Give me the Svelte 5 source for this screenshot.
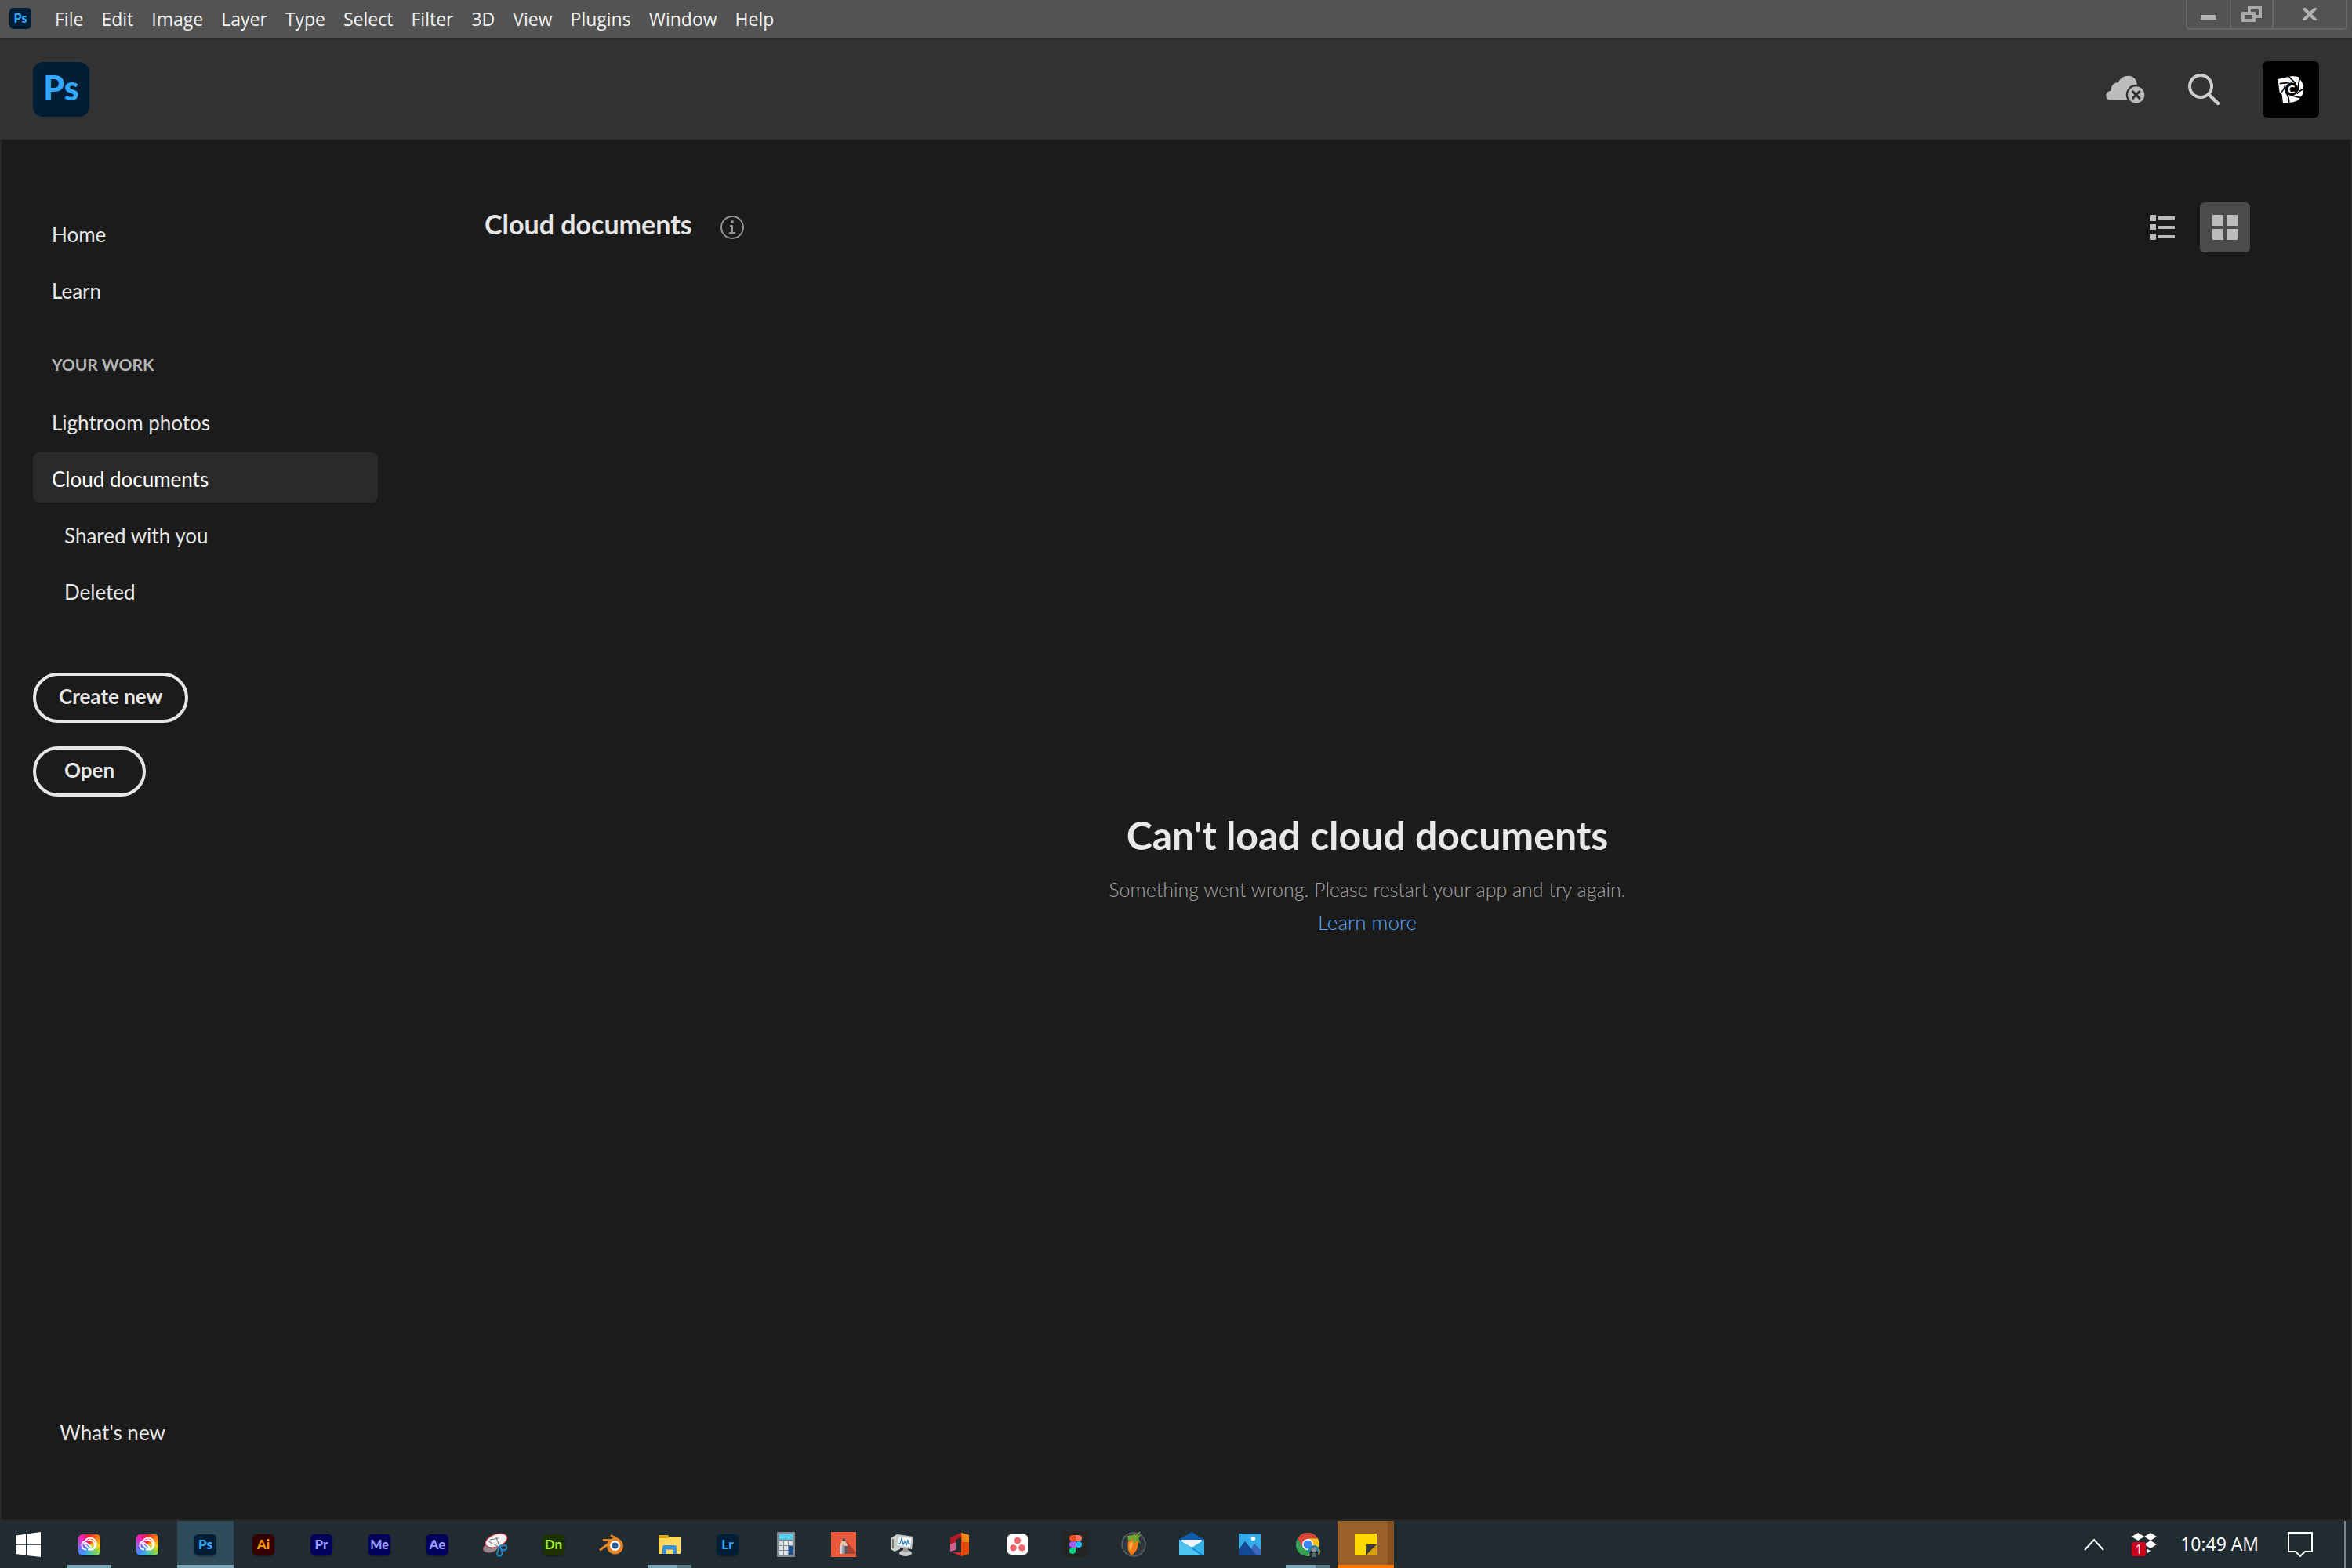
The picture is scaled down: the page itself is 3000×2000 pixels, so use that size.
<script>
  const menus = ['File', 'Edit', 'Image', 'Layer', 'Type', 'Select', 'Filter', '3D', 'View', 'Plugins', 'Window', 'Help'];
  const primary = ['Home', 'Learn'];
  const work = [
    { label: 'Lightroom photos' },
    { label: 'Cloud documents', current: true },
    { label: 'Shared with you', sub: true },
    { label: 'Deleted', sub: true }
  ];
  const apps = [
    { name: 'Creative Cloud', icon: 'cc', state: 'running' },
    { name: 'Creative Cloud Desktop', icon: 'cc' },
    { name: 'Photoshop', tile: 'Ps', state: 'active' },
    { name: 'Illustrator', tile: 'Ai' },
    { name: 'Premiere Pro', tile: 'Pr' },
    { name: 'Media Encoder', tile: 'Me' },
    { name: 'After Effects', tile: 'Ae' },
    { name: 'Snipping Tool', icon: 'snip' },
    { name: 'Dimension', tile: 'Dn' },
    { name: 'Blender', icon: 'blender' },
    { name: 'File Explorer', icon: 'folder', state: 'running stacked' },
    { name: 'Lightroom', tile: 'Lr' },
    { name: 'Calculator', icon: 'calc' },
    { name: 'SketchBook', icon: 'sketch' },
    { name: 'Resource Monitor', icon: 'monitor' },
    { name: 'Office', icon: 'office' },
    { name: 'Asana', icon: 'asana' },
    { name: 'Figma', icon: 'figma' },
    { name: 'FL Studio', icon: 'fruit' },
    { name: 'Mail', icon: 'mail' },
    { name: 'Photos', icon: 'photos' },
    { name: 'Chrome', icon: 'chrome', state: 'running stacked' },
    { name: 'Sticky Notes', icon: 'sticky', state: 'alert' }
  ];
</script>

<div class="window">
  <div class="menubar">
    <span class="logo small">Ps</span>
    <nav class="menus" aria-label="Application menu">
      {#each menus as m}<button>{m}</button>{/each}
    </nav>
    <div class="controls">
      <button aria-label="Minimize"><svg width="20" height="20"><path d="M0 11h20v6H0z" fill="#b2b2b2" /></svg></button>
      <button aria-label="Restore">
        <svg width="26" height="20"><g fill="none" stroke="#a8a8a8" stroke-width="4"><path d="M10 8V2h14v11h-6" /><path d="M2 9h14v9H2z" /></g></svg>
      </button>
      <button class="close" aria-label="Close"><svg width="20" height="16"><path d="M2 0l16 16M18 0L2 16" stroke="#b2b2b2" stroke-width="4" /></svg></button>
    </div>
  </div>

  <header>
    <span class="logo">Ps</span>
    <div class="tools">
      <button aria-label="Cloud sync status">
        <svg width="50" height="40" viewBox="20 70 150 120">
          <path fill="#bcbcbc" d="M38 171C28 171 21 164 21 154S28 136 39 136C39 116 52 102 68 104C74 87 90 77 108 78C127 79 140 94 139 112A38 38 0 0 0 104 171z" />
          <circle cx="136" cy="151" r="38" fill="#323232" />
          <circle cx="136" cy="151" r="32" fill="#bcbcbc" />
          <path d="M123 138l26 26M149 138l-26 26" stroke="#323232" stroke-width="9" stroke-linecap="round" />
        </svg>
      </button>
      <button aria-label="Search">
        <svg width="40" height="40" viewBox="330 72 120 120" fill="none" stroke="#cdcdcd">
          <circle cx="378" cy="120" r="42" stroke-width="12" />
          <path d="M410 152l34 34" stroke-width="13" stroke-linecap="round" />
        </svg>
      </button>
      <button class="avatar" aria-label="Account">
        <svg width="34" height="37" viewBox="678 76 102 111">
          <path fill="#fff" d="M679 91L735 79L758 82L771 101L777 118L775 148L757 172L738 179L699 184L695 150L686 141z" />
          <circle cx="732" cy="129" r="25" fill="#000" />
          <g stroke="#000" stroke-width="5" fill="none">
            <path d="M686 108L722 104M722 82L748 108M764 88Q756 108 757 135M778 127Q764 135 752 147M768 162Q745 158 726 150M722 184Q724 160 708 140M690 143Q704 132 707 112" />
          </g>
          <text x="731" y="144" text-anchor="middle" font-family="Lato" font-weight="900" font-size="42" fill="#fff">C</text>
        </svg>
      </button>
    </div>
  </header>

  <div class="body">
    <aside>
      <nav class="links" aria-label="Home">
        {#each primary as p}<a href="#home">{p}</a>{/each}
      </nav>
      <h2>YOUR WORK</h2>
      <nav class="links" aria-label="Your work">
        {#each work as w}<a href="#work" class:sub={w.sub} class:current={w.current}>{w.label}</a>{/each}
      </nav>
      <div class="actions">
        <button>Create new</button>
        <button>Open</button>
      </div>
      <a class="news" href="#news">What's new</a>
    </aside>

    <main>
      <div class="heading">
        <h1>Cloud documents</h1>
        <button class="info" aria-label="About cloud documents">
          <svg width="30" height="30" fill="none" stroke="#929292" stroke-width="2">
            <circle cx="15" cy="15" r="14" />
            <path d="M12 13h3v9M11 22h8" /><circle cx="15" cy="8" r="1" fill="#929292" />
          </svg>
        </button>
        <div class="views">
          <button aria-label="List view">
            <svg width="32" height="32" fill="#bcbcbc">
              {#each [0, 12, 24] as y}<rect {y} width="8" height="8" rx="1" /><rect x="10" y={y + 2} width="22" height="4" rx="1" />{/each}
            </svg>
          </button>
          <button class="on" aria-label="Grid view" aria-pressed="true">
            <svg width="32" height="32" fill="#bcbcbc">
              {#each [0, 18] as y}{#each [0, 18] as x}<rect {x} {y} width="14" height="14" rx="1" />{/each}{/each}
            </svg>
          </button>
        </div>
      </div>
      <section class="empty">
        <h3>Can't load cloud documents</h3>
        <p>Something went wrong. Please restart your app and try again.</p>
        <a href="#more">Learn more</a>
      </section>
    </main>
  </div>

  <footer>
    <button class="start" aria-label="Start">
      <svg width="32" height="32" fill="#fff"><path d="M0 4.500L13 2.700V15.300H0zM14.300 2.500L32 0V15.300H14.300zM0 16.700H13V29.700L0 28zM14.300 16.700H32V32L14.300 29.900z" /></svg>
    </button>
    <div class="apps">
      {#each apps as a}
        <button class="app {a.state ?? ''}" aria-label={a.name}>
          {#if a.tile}
            <span class="tile {a.tile}">{a.tile}</span>
          {:else if a.icon === 'cc'}
            <span class="tile cc">
              <svg width="28" height="28" fill="none" stroke="#fff" stroke-width="1.800">
                <path d="M10 20.500H9.500A5.500 5.500 0 0 1 8.500 9.700A7.500 7.500 0 1 1 17 20.500C14 20.500 12.500 18 8 14" />
                <path d="M6.500 13.500Q9 10.500 12 13.500L17 18M11.500 9.500Q15 6.500 18.500 10T20.500 16.500M12 20.500Q18 21.500 20.500 17" />
              </svg>
            </span>
          {:else}
            <svg width="32" height="32" viewBox="0 0 32 32">
              {#if a.icon === 'snip'}
                <ellipse cx="10" cy="20" rx="10" ry="6" fill="#8e8e90" stroke="#a94448" stroke-width=".7" transform="rotate(-15 10 20)" />
                <ellipse cx="17" cy="11" rx="14.500" ry="8" fill="#f4f2f3" stroke="#d2353c" stroke-width="1.200" transform="rotate(-20 17 11)" />
                <path d="M7 12L20 19M17 7L22 21M9 10L20 8" stroke="#707478" stroke-width="1" fill="none" />
                <g fill="none" stroke="#2386c4" stroke-width="2"><path d="M21 18L29 17Q32 21 28 23T21 18zM21 18L18 28Q19 32 23 30T21 18z" /></g>
              {:else if a.icon === 'blender'}
                <path d="M2 22.500L15 13M6 10.500H19M16 5Q25 9 28 14" stroke="#e58423" stroke-width="3" stroke-linecap="round" fill="none" />
                <circle cx="20.500" cy="18" r="10.500" fill="#e58423" /><circle cx="20.500" cy="17.500" r="6.500" fill="#fff" /><circle cx="20.500" cy="17.500" r="4" fill="#255c99" />
              {:else if a.icon === 'folder'}
                <path d="M2 4h12l2 3v4H2z" fill="#dba514" /><path d="M2 8h12l3-2h13v22H2z" fill="#ffd75e" />
                <path d="M7 28V18.500L9 17H23L25 18.500V28H20.500V22.500H12V28z" fill="#3590d8" />
              {:else if a.icon === 'calc'}
                <rect x="5" width="23" height="32" rx="1" fill="#7f8b93" /><rect x="8" y="3" width="17" height="6.500" fill="#4fd0f4" />
                {#each [12, 18, 24] as y}{#each [8, 14, 20] as x}<rect {x} {y} width="5" height="5" fill="#dfe3e6" />{/each}{/each}
                <path d="M20 18h5v11h-5z" fill="#194f91" />
              {:else if a.icon === 'sketch'}
                <path d="M0 0h32v32H0z" fill="#e9593a" /><path d="M16 7L32 27V28H20z" fill="#a64330" />
                <path d="M11 17L16 7L21 17V28H11z" fill="#e9c3a6" /><path d="M14 11.500L16 7L18.500 12z" fill="#303033" />
                <path d="M11 18h3v10h-3z" fill="#d6d7dc" /><path d="M14 17h3.500v11H14z" fill="#a09ca5" /><path d="M17.500 18H21v10h-3.500z" fill="#5c5460" />
              {:else if a.icon === 'monitor'}
                <path d="M2 8L10 3L14 5V22L7 25L2 22z" fill="#cbcfcc" /><path d="M5 9V21" stroke="#4c644b" stroke-width="1.500" />
                <ellipse cx="21" cy="27" rx="8" ry="4" fill="#c9cac8" /><path d="M18 20h6v6h-6z" fill="#999" />
                <path d="M11 3L31 6L29 22L7 19z" fill="#c4c6c3" /><path d="M13 5.500L28.500 8L27 19.500L10 17z" fill="#f6f8f9" />
                <path d="M11 15L14 15L16 8L18 16L20 12L22 17L24 10L25 15L27 15" fill="none" stroke="#2c82bf" stroke-width="1.200" />
              {:else if a.icon === 'office'}
                <path d="M4 7L18 1V7L11 10V23L4 25z" fill="#b31b24" /><path d="M4 16L11 13V23L4 25z" fill="#cf5f91" />
                <path d="M18 1L28 4V28L18 31z" fill="#e8480c" /><path d="M18 1L28 4V13H20z" fill="#f58a13" /><path d="M7 26H18V31z" fill="#d22b2d" />
              {:else if a.icon === 'asana'}
                <rect x="3" y="3" width="26" height="26" rx="5" fill="#fff" />
                <g fill="#f5636d"><circle cx="16" cy="11" r="4.200" /><circle cx="10.500" cy="20.300" r="4.200" /><circle cx="21.500" cy="20.300" r="4.200" /></g>
              {:else if a.icon === 'figma'}
                <path d="M0 0h32v32H0z" fill="#242424" />
                <path d="M16 4h-4a4 4 0 0 0 0 8h4z" fill="#f24e1e" /><path d="M16 4h4a4 4 0 0 1 0 8h-4z" fill="#ff7262" />
                <path d="M16 12h-4a4 4 0 0 0 0 8h4z" fill="#a259ff" /><circle cx="20" cy="16" r="4" fill="#1abcfe" /><path d="M16 20h-4a4 4 0 1 0 4 4z" fill="#0acf83" />
              {:else if a.icon === 'fruit'}
                <circle cx="16" cy="16" r="15" fill="#30383b" stroke="#566164" stroke-width="1.500" />
                <path d="M9 12Q17 6 22 13Q22 24 13 30Q7 24 9 12z" fill="#f47a16" /><path d="M11 15Q13 11 15 14Q14 21 12 24Q9 20 11 15z" fill="#ffae48" />
                <path d="M8 5L14 4L19 2L18 5L25 4L22 8L25 15L20 11L17 16L15 10L9 11z" fill="#6fa52d" /><path d="M18 6L24 0" stroke="#7eae3a" stroke-width="1.500" />
              {:else if a.icon === 'mail'}
                <path d="M0 9.500L16 0L32 9.500V14H0z" fill="#0b5cad" /><path d="M3 10H29V20H3z" fill="#f2f4f8" />
                <path d="M0 10L16 20L32 10V30H0z" fill="#35b3ea" /><path d="M0 30L16 19L32 30z" fill="#1988d4" /><path d="M0 10L28 30H0z" fill="#4fc4f2" />
              {:else if a.icon === 'photos'}
                <path d="M2 2h28v28H2z" fill="#34aae8" /><path d="M12 30L22 15L30 23V30z" fill="#3b67bd" /><path d="M2 22L10 12L25 30H2z" fill="#144a94" />
                <circle cx="20.500" cy="8.500" r="2.800" fill="#fff" />
              {:else if a.icon === 'chrome'}
                <circle cx="16" cy="16" r="15" fill="#34a055" /><path d="M16 16L3 8.500A15 15 0 0 1 29 8.500H16z" fill="#db4437" />
                <path d="M16 8.500H29A15 15 0 0 1 16 31L22.500 19z" fill="#fbc21f" /><path d="M3 8.500L9.500 20L16 16V8.500z" fill="#db4437" /><path d="M3 8.500L9.500 20L14 30.900A15 15 0 0 1 3 8.500z" fill="#34a055" />
                <circle cx="16" cy="16" r="7" fill="#fff" /><circle cx="16" cy="16" r="5.500" fill="#4285f4" />
                <circle cx="24" cy="24.500" r="7.500" fill="#2384ad" /><path d="M18 31Q19 22 24 19Q29 22 30 31z" fill="#20262a" /><circle cx="24" cy="23" r="3.500" fill="#8b9498" /><path d="M21 27h6v4h-6z" fill="#596166" />
                <path d="M30 22Q32 25 30 29" stroke="#d7b33a" stroke-width="1.500" fill="none" />
              {:else}
                <path d="M2 2H30V16L16 30H2z" fill="#ffd900" /><path d="M30 16V30H16z" fill="#dba007" /><path d="M16 16H30L16 30z" fill="#39393b" />
              {/if}
            </svg>
          {/if}
        </button>
      {/each}
    </div>
    <div class="tray">
      <button aria-label="Show hidden icons"><svg width="26" height="16"><path d="M1 15L13 2L25 15" fill="none" stroke="#fff" stroke-width="2" /></svg></button>
      <button class="dropbox" aria-label="Dropbox, 1 notification">
        <svg width="32" height="30" fill="#fff"><path d="M8 0L16 5L8 10L0 5zM24 0L32 5L24 10L16 5zM24 10L32 15L24 20L16 15zM20 21L24 23L20 26z" /></svg>
        <span class="badge">1</span>
      </button>
      <time>10:49 AM</time>
      <button aria-label="Notifications">
        <svg width="32" height="32" fill="none" stroke="#fff" stroke-width="2"><path d="M1 1H31V25H22L16 31L10 25H1z" /></svg>
      </button>
    </div>
    <button class="peek" aria-label="Show desktop"></button>
  </footer>
</div>

<style>
  :global(body) { margin: 0; background: #1b1b1b; }
  * { box-sizing: border-box; }
  button { margin: 0; padding: 0; border: 0; background: none; color: inherit; font: inherit; display: flex; align-items: center; justify-content: center; }
  a { color: inherit; text-decoration: none; }
  h1, h2, h3, p { margin: 0; }
  svg { display: block; flex: none; }

  .window { min-height: 100vh; display: flex; flex-direction: column; color: #e6e6e6; font: 26px/32px Lato, sans-serif; }

  .menubar { height: 50px; display: flex; align-items: flex-start; padding: 0 6px 0 12px; background: #535353; border-bottom: 2px solid #292929; color: #f0f0f0; font: 23px/48px "Open Sans", sans-serif; }
  .menus { display: flex; gap: 23px; margin-left: 30px; flex: 1; }
  .logo { display: flex; align-items: center; justify-content: center; width: 72px; height: 70px; padding-bottom: 4px; border-radius: 13px; background: #001e36; color: #31a8ff; font: 900 43px/60px Lato, sans-serif; }
  .logo.small { width: 28px; height: 27px; margin-top: 10px; padding-bottom: 1px; border-radius: 5px; font-size: 16px; line-height: 26px; }
  .controls { display: flex; height: 38px; border: 2px solid #666; border-top: 0; border-radius: 0 0 5px 5px; }
  .controls button { width: 54px; }
  .controls button + button { border-left: 2px solid #666; }
  .controls .close { width: 94px; }

  header { height: 128px; display: flex; align-items: center; justify-content: space-between; padding: 0 42px; background: #323232; }
  .tools { display: flex; align-items: center; gap: 55px; }
  .avatar { width: 72px; height: 72px; border-radius: 6px; background: #000; }

  .body { flex: 1; display: flex; background: #1b1b1b; border: 2px solid #272727; border-top: 0; }
  aside { width: 480px; padding: 87px 0 81px 40px; display: flex; flex-direction: column; }
  .links { display: flex; flex-direction: column; gap: 8px; }
  .links a, .news { height: 64px; padding: 18px 24px 14px; border-radius: 8px; }
  .links .sub { padding-left: 40px; }
  .links .current { background: #2a2a2a; color: #fff; }
  h2 { padding: 51px 24px 28px; color: #b3b3b3; font: bold 21px/25px Lato, sans-serif; }
  .actions { display: flex; flex-direction: column; align-items: flex-start; gap: 30px; margin-top: 73px; flex: 1; }
  .actions button { height: 64px; min-width: 144px; padding: 0 29px 4px; border: 4px solid #e6e6e6; border-radius: 32px; font-weight: bold; }
  .news { padding-left: 34px; }

  main { flex: 1; padding: 80px 128px 28px 136px; display: flex; flex-direction: column; }
  .heading { display: flex; align-items: center; }
  h1 { padding-bottom: 8px; font: bold 34px/40px Lato, sans-serif; }
  .info { margin-left: 36px; }
  .views { margin-left: auto; display: flex; gap: 16px; }
  .views button { width: 64px; height: 64px; border-radius: 6px; }
  .views .on { background: #4b4b4b; }
  .empty { flex: 1; display: flex; flex-direction: column; align-items: center; justify-content: center; font-weight: 300; font-size: 25px; line-height: 42px; color: #a2a2a2; }
  .empty h3 { margin-bottom: 18px; font: bold 50px/60px Lato, sans-serif; color: #e8e8e8; }
  .empty a { color: #55a3f8; font-size: 26px; }

  footer { height: 60px; display: flex; background: #202c31; color: #fff; }
  .start { width: 72px; }
  .apps { display: flex; gap: 2px; margin-left: 6px; }
  .app { position: relative; width: 72px; }
  .active { background: #2f4a59; }
  .alert { background: linear-gradient(90deg, #9a602b 64px, #85511f 64px); }
  .running::after, .active::after, .alert::after { content: ''; position: absolute; left: 8px; right: 8px; bottom: 0; height: 4px; background: #7aa3b5; }
  .active::after, .alert::after { left: 0; right: 0; }
  .alert::after { background: #ff7800; }
  .stacked::after { background: linear-gradient(90deg, #7aa3b5 38px, #567483 38px); }
  .tile { display: flex; align-items: center; justify-content: center; width: 28px; height: 27px; padding-bottom: 2px; border-radius: 5px; font: 900 17px/25px Lato, sans-serif; box-shadow: 0 1px 2px #0006; }
  .Ps, .Lr { background: #001e36; color: #31a8ff; }
  .Ai { background: #330000; color: #ff9a00; }
  .Pr, .Me, .Ae { background: #00005b; color: #9999ff; }
  .Me { font-size: 16px; }
  .Dn { background: #1d3200; color: #9ee83d; }
  .cc { overflow: hidden; padding: 0; background: conic-gradient(#f21a1a, #ff7a1a 50deg, #ffd21f 95deg, #8bd34c 130deg, #4fc0b0 175deg, #3f8cff 225deg, #a05cf0 265deg, #f020c0 310deg, #f21a1a); }
  .tray { margin-left: auto; display: flex; align-items: center; padding-right: 40px; font: 23px/30px "Open Sans", sans-serif; }
  .dropbox { position: relative; margin: 0 30px 0 35px; }
  .badge { position: absolute; left: 0; bottom: 0; width: 18px; height: 18px; border-radius: 3px; background: #d0021b; font: 16px/18px "Open Sans", sans-serif; }
  time { margin-right: 37px; padding-bottom: 2px; }
  .peek { width: 10px; border-left: 2px solid #78858a; }
</style>
